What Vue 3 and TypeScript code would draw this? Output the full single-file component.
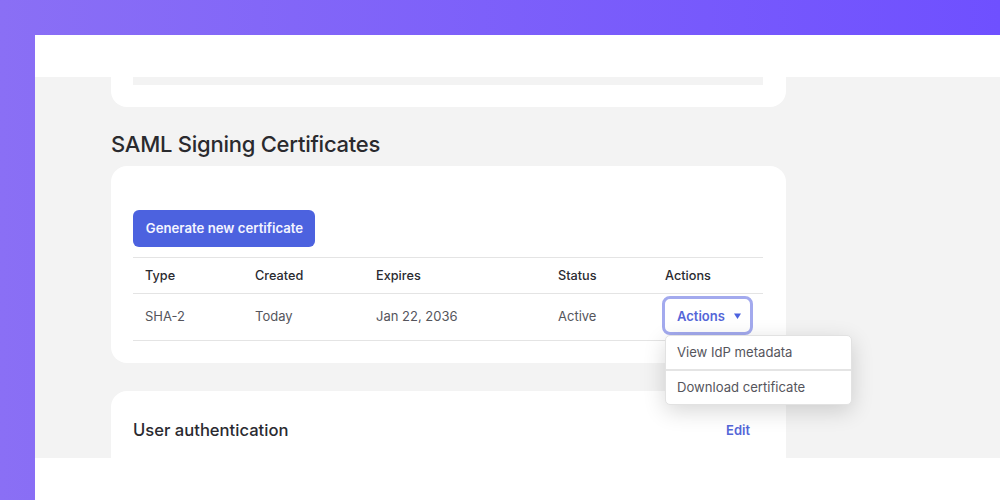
<template>
  <div class="frame">
    <div class="window">
      <div class="topbar"></div>
      <main class="content">
        <section class="card card-cut">
          <div class="strip"></div>
        </section>

        <h2 class="heading">SAML Signing Certificates</h2>

        <section class="card card-certs">
          <button class="primary-btn">Generate new certificate</button>
          <div class="table">
            <div class="row row-head">
              <span v-for="col in columns" :key="col">{{ col }}</span>
            </div>
            <div v-for="cert in certificates" :key="cert.type" class="row row-body">
              <span>{{ cert.type }}</span>
              <span>{{ cert.created }}</span>
              <span>{{ cert.expires }}</span>
              <span>{{ cert.status }}</span>
              <div class="actions">
                <button class="actions-btn">
                  Actions
                  <svg class="caret" width="7" height="6" viewBox="0 0 7 6">
                    <path d="M0 0.5h7L3.5 6z" fill="#4c62df" />
                  </svg>
                </button>
                <ul class="menu">
                  <li v-for="item in menuItems" :key="item">{{ item }}</li>
                </ul>
              </div>
            </div>
          </div>
        </section>

        <section class="card card-auth">
          <h3 class="auth-title">User authentication</h3>
          <a class="edit-link">Edit</a>
        </section>
      </main>
      <div class="bottombar"></div>
    </div>
  </div>
</template>

<script setup lang="ts">
interface Certificate {
  type: string
  created: string
  expires: string
  status: string
}

const columns = ['Type', 'Created', 'Expires', 'Status', 'Actions']
const menuItems = ['View IdP metadata', 'Download certificate']

const certificates: Certificate[] = [
  { type: 'SHA-2', created: 'Today', expires: 'Jan 22, 2036', status: 'Active' }
]
</script>

<style>
html,
body {
  margin: 0;
}
</style>

<style scoped>
.frame {
  width: 1000px;
  height: 500px;
  padding: 35px 0 0 35px;
  box-sizing: border-box;
  background: linear-gradient(90deg, #8a6ff5 0%, #6f50ff 100%);
  font-family: Inter, "Liberation Sans", sans-serif;
  overflow: hidden;
}

.window {
  width: 965px;
  height: 465px;
  display: flex;
  flex-direction: column;
  background: #fff;
}

.topbar {
  height: 42px;
  flex: none;
}

.bottombar {
  height: 42px;
  flex: none;
}

.content {
  flex: 1;
  min-height: 0;
  overflow: hidden;
  background: #f3f3f3;
  padding-left: 76px;
}

.card {
  width: 675px;
  box-sizing: border-box;
  background: #fff;
  border-radius: 16px;
  padding: 0 23px 0 22px;
}

.card-cut {
  height: 30px;
  border-radius: 0 0 16px 16px;
}

.strip {
  height: 8px;
  background: #f3f3f3;
}

.heading {
  margin: 0;
  padding-top: 24px;
  height: 35px;
  line-height: 26px;
  font-size: 22px;
  font-weight: 500;
  letter-spacing: -0.25px;
  color: #2a2a2e;
}

.card-certs {
  height: 197px;
  padding-top: 44px;
}

.primary-btn {
  display: block;
  width: 182px;
  height: 37px;
  padding: 0 0 1px 1px;
  border: none;
  border-radius: 6px;
  background: #4c62df;
  color: #f4f5ff;
  font-family: inherit;
  font-size: 13.2px;
  font-weight: 600;
}

.table {
  margin-top: 10px;
  border-top: 1px solid #e4e4e4;
  border-bottom: 1px solid #e4e4e4;
}

.row {
  display: grid;
  grid-template-columns: 110px 121px 182px 107px 1fr;
  padding-left: 12px;
  align-items: center;
  box-sizing: border-box;
  font-size: 12.7px;
}

.row-head {
  height: 36px;
  padding-bottom: 1px;
  border-bottom: 1px solid #e4e4e4;
  color: #2a2a30;
  font-weight: 500;
}

.row-body {
  height: 46px;
  padding-bottom: 3px;
  color: #55555c;
  font-size: 13px;
}

.actions {
  position: relative;
}

.actions-btn {
  display: flex;
  align-items: center;
  gap: 9px;
  width: 91px;
  height: 39px;
  margin: 0 0 0 -3px;
  padding: 0 0 0 12px;
  box-sizing: border-box;
  border: 3px solid #a3aaee;
  border-radius: 8px;
  background: #fff;
  color: #5466d8;
  font-family: inherit;
  font-size: 13px;
  font-weight: 600;
}

.caret {
  flex: none;
}

.menu {
  position: absolute;
  top: 39px;
  left: 0;
  width: 187px;
  margin: 0;
  padding: 0;
  box-sizing: border-box;
  list-style: none;
  background: #fff;
  border: 1px solid #e2e2e2;
  border-radius: 5px;
  box-shadow: 0 6px 22px rgba(0, 0, 0, 0.16);
  color: #55555c;
  font-size: 13.1px;
  z-index: 2;
}

.menu li {
  height: 33px;
  line-height: 33px;
  padding-left: 11px;
}

.menu li + li {
  border-top: 2px solid #e4e4e4;
  height: 33px;
  line-height: 32px;
}

.card-auth {
  margin-top: 28px;
  height: 90px;
  display: flex;
  justify-content: space-between;
  align-items: flex-start;
  padding-top: 28px;
}

.auth-title {
  margin: 0;
  font-size: 16.6px;
  line-height: 22px;
  font-weight: 500;
  color: #2a2a30;
}

.edit-link {
  margin-right: 13px;
  font-size: 13px;
  line-height: 22px;
  font-weight: 600;
  color: #5466d8;
}
</style>
